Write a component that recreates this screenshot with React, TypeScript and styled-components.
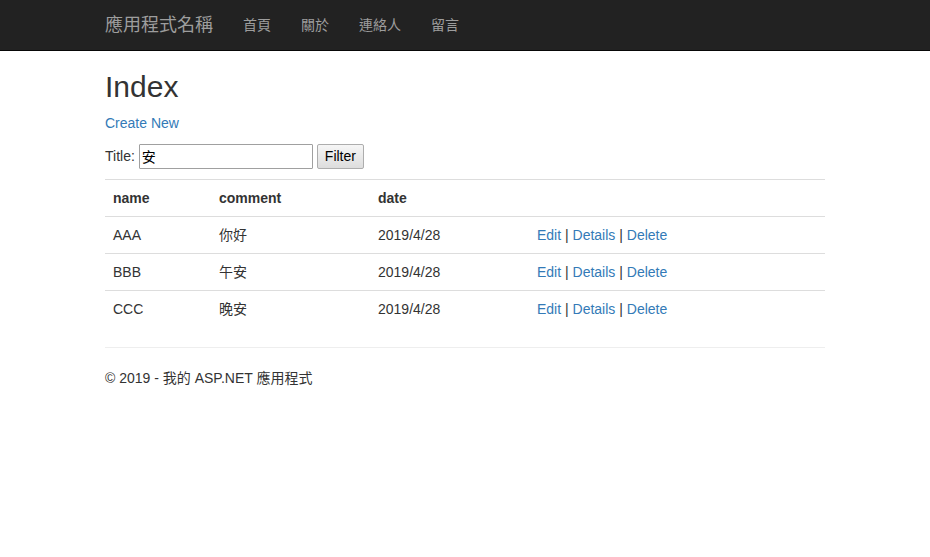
import React from "react";
import styled, { createGlobalStyle } from "styled-components";

const FONT = `"Liberation Sans", Arial, "Noto Sans CJK TC", sans-serif`;

const Global = createGlobalStyle`
  html, body { margin: 0; padding: 0; background: #fff; }
  body {
    font-family: ${FONT};
    font-size: 14px;
    line-height: 20px;
    color: #333;
    padding-top: 50px;
  }
  * { box-sizing: border-box; }
`;

const Navbar = styled.nav`
  position: fixed;
  top: 0;
  left: 0;
  right: 0;
  height: 51px;
  background: #222;
  border-bottom: 1px solid #080808;
`;

const NavInner = styled.div`
  width: 750px;
  margin: 0 auto;
  display: flex;
  align-items: center;
  height: 50px;
`;

const Brand = styled.a`
  padding: 15px;
  font-size: 18px;
  line-height: 20px;
  color: #9d9d9d;
  text-decoration: none;
`;

const NavLink = styled.a`
  padding: 15px;
  font-size: 14px;
  line-height: 20px;
  color: #9d9d9d;
  text-decoration: none;
`;

const Container = styled.div`
  width: 750px;
  margin: 0 auto;
  padding: 0 15px;
`;

const Title = styled.h2`
  font-size: 30px;
  font-weight: 500;
  line-height: 33px;
  margin: 20px 0 10px;
  color: #333;
`;

const P = styled.p`
  margin: 0 0 10px;
`;

const FormRow = styled.p`
  margin: 0 0 10px;
  display: flex;
  align-items: center;
  height: 26px;
`;

const Link = styled.a`
  color: #337ab7;
  text-decoration: none;
`;

const Input = styled.input`
  width: 174px;
  height: 25px;
  font-family: ${FONT};
  font-size: 14px;
  padding: 1px 2px;
  border: 1px solid #a0a0a0;
  border-radius: 1px;
  margin-left: 4px;
`;

const Button = styled.button`
  height: 25px;
  font-family: ${FONT};
  font-size: 14px;
  padding: 1px 7px;
  margin-left: 4px;
  border: 1px solid #adadad;
  border-radius: 2px;
  background: linear-gradient(#f6f6f6, #dddddd);
  color: #000;
`;

const Table = styled.table`
  width: 720px;
  border-collapse: collapse;
  border-spacing: 0;
  margin-bottom: 20px;
  table-layout: fixed;
`;

const Th = styled.th<{ $w?: number }>`
  text-align: left;
  font-weight: bold;
  padding: 8px;
  line-height: 20px;
  border-top: 1px solid #ddd;
  width: ${(p) => (p.$w ? `${p.$w}px` : "auto")};
`;

const Td = styled.td`
  padding: 8px;
  line-height: 20px;
  border-top: 1px solid #ddd;
`;

const Hr = styled.hr`
  margin: 20px 0;
  border: 0;
  border-top: 1px solid #eee;
`;

const rows = [
  { name: "AAA", comment: "你好", date: "2019/4/28" },
  { name: "BBB", comment: "午安", date: "2019/4/28" },
  { name: "CCC", comment: "晚安", date: "2019/4/28" },
];

export default function App() {
  return (
    <>
      <Global />
      <Navbar>
        <NavInner>
          <Brand href="#">應用程式名稱</Brand>
          <NavLink href="#">首頁</NavLink>
          <NavLink href="#">關於</NavLink>
          <NavLink href="#">連絡人</NavLink>
          <NavLink href="#">留言</NavLink>
        </NavInner>
      </Navbar>
      <Container>
        <Title>Index</Title>
        <P>
          <Link href="#">Create New</Link>
        </P>
        <FormRow as="div">
          Title:<Input defaultValue="安" />
          <Button>Filter</Button>
        </FormRow>
        <Table>
          <tbody>
            <tr>
              <Th $w={106}>name</Th>
              <Th $w={159}>comment</Th>
              <Th $w={159}>date</Th>
              <Th></Th>
            </tr>
            {rows.map((r) => (
              <tr key={r.name}>
                <Td>{r.name}</Td>
                <Td>{r.comment}</Td>
                <Td>{r.date}</Td>
                <Td>
                  <Link href="#">Edit</Link> | <Link href="#">Details</Link> |{" "}
                  <Link href="#">Delete</Link>
                </Td>
              </tr>
            ))}
          </tbody>
        </Table>
        <Hr />
        <footer>
          <P>© 2019 - 我的 ASP.NET 應用程式</P>
        </footer>
      </Container>
    </>
  );
}
